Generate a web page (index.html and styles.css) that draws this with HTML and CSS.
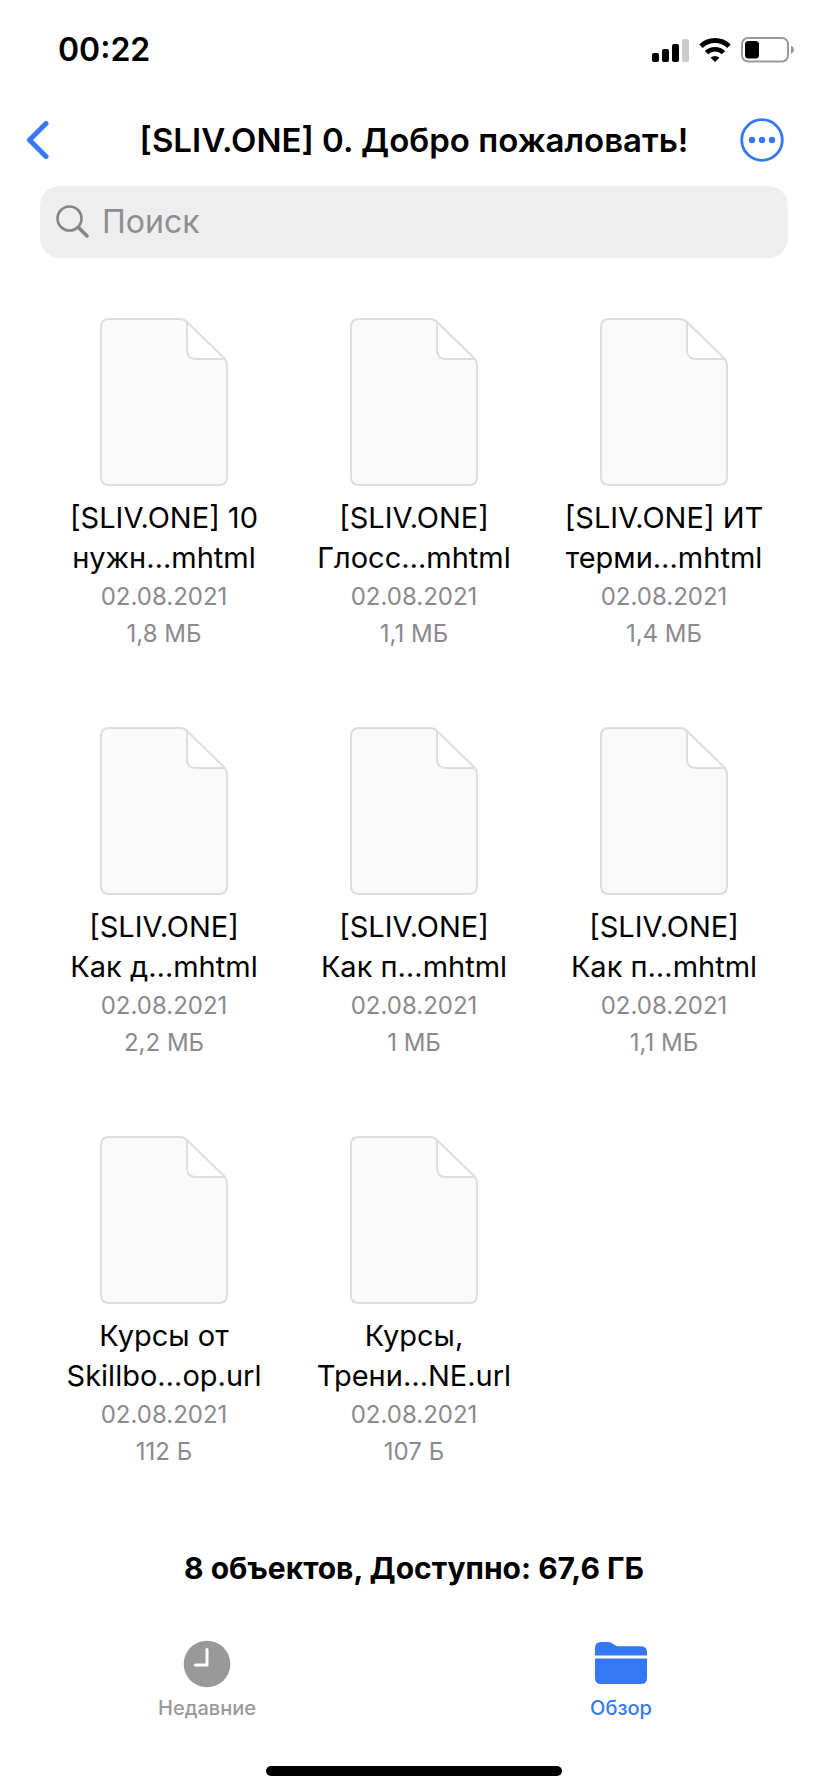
FILE: index.html
```html
<!DOCTYPE html>
<html lang="ru">
<head>
<meta charset="utf-8">
<meta name="viewport" content="width=device-width, initial-scale=1">
<title>[SLIV.ONE] 0. Добро пожаловать!</title>
<link rel="stylesheet" href="styles.css">
</head>
<body>
<svg class="defs" aria-hidden="true">
  <symbol id="doc" viewBox="0 0 128 168">
    <path d="M9 1H80Q84 1 87 4L124 40Q127 43 127 48V159Q127 167 119 167H9Q1 167 1 159V9Q1 1 9 1Z" fill="#fafafa"/>
    <path d="M87 4L124 41H96Q87 41 87 32Z" fill="#fff"/>
    <path d="M9 1H80Q84 1 87 4L124 40Q127 43 127 48V159Q127 167 119 167H9Q1 167 1 159V9Q1 1 9 1ZM87 4V32Q87 41 96 41H124" fill="none" stroke="#dedede" stroke-width="2"/>
  </symbol>
</svg>
<div class="screen">
  <div class="status">
    <span class="time">00:22</span>
    <div class="indicators">
      <svg width="37" height="24" viewBox="0 0 37 24"><rect y="15" width="7" height="9" rx="2"/><rect x="10" y="11" width="7" height="13" rx="2"/><rect x="20" y="6" width="7" height="18" rx="2"/><rect x="30" y="1" width="7" height="23" rx="2" fill="#ccc"/></svg>
      <svg width="32" height="24" viewBox="0 0 32 24"><path d="M2 8.200Q8 2.500 16 2.500T30 8.200" fill="none" stroke="#000" stroke-width="5"/><path d="M7.500 14.700Q11 11.200 16 11.200T24.500 14.700" fill="none" stroke="#000" stroke-width="4.600"/><path d="M11.600 19.600Q16 16.200 20.400 19.600L16.600 23.400Q16 24 15.400 23.400Z"/></svg>
      <svg width="53" height="26" viewBox="0 0 53 26"><rect x="1" y="1" width="46" height="23.500" rx="6" fill="none" stroke="#999" stroke-width="2"/><rect x="4" y="4" width="14" height="17.500" rx="3.500"/><path d="M50 8.500Q53 10 53 12.800T50 17Z" fill="#999"/></svg>
    </div>
  </div>
  <header class="nav">
    <button class="icon-button" type="button" aria-label="Назад"><svg width="24" height="40" viewBox="0 0 24 40"><path d="M20 3.500L3.500 20L20 36.500" fill="none" stroke="#3478f6" stroke-width="5" stroke-linecap="round" stroke-linejoin="round"/></svg></button>
    <h1 class="title">[SLIV.ONE] 0. Добро пожаловать!</h1>
    <button class="icon-button more" type="button" aria-label="Ещё"><svg width="44" height="44" viewBox="0 0 44 44"><circle cx="22" cy="22" r="20.300" fill="none" stroke="#3478f6" stroke-width="2.800"/><g fill="#3478f6"><circle cx="12" cy="22" r="3.200"/><circle cx="22" cy="22" r="3.200"/><circle cx="32" cy="22" r="3.200"/></g></svg></button>
  </header>
  <label class="search">
    <svg width="34" height="34" viewBox="0 0 34 34" fill="none" stroke="#858589" stroke-linecap="round"><circle cx="13.500" cy="13.500" r="12" stroke-width="2.600"/><path d="M22.500 22.500L31 31" stroke-width="3.600"/></svg>
    <input class="search-input" type="search" placeholder="Поиск" aria-label="Поиск">
  </label>
  <main class="content">
    <ul class="files">
      <li class="file"><svg class="doc"><use href="#doc"/></svg><span class="name">[SLIV.ONE] 10<br>нужн…mhtml</span><span class="meta">02.08.2021</span><span class="meta">1,8 МБ</span></li>
      <li class="file"><svg class="doc"><use href="#doc"/></svg><span class="name">[SLIV.ONE]<br>Глосс…mhtml</span><span class="meta">02.08.2021</span><span class="meta">1,1 МБ</span></li>
      <li class="file"><svg class="doc"><use href="#doc"/></svg><span class="name">[SLIV.ONE] ИТ<br>терми…mhtml</span><span class="meta">02.08.2021</span><span class="meta">1,4 МБ</span></li>
      <li class="file"><svg class="doc"><use href="#doc"/></svg><span class="name">[SLIV.ONE]<br>Как д…mhtml</span><span class="meta">02.08.2021</span><span class="meta">2,2 МБ</span></li>
      <li class="file"><svg class="doc"><use href="#doc"/></svg><span class="name">[SLIV.ONE]<br>Как п…mhtml</span><span class="meta">02.08.2021</span><span class="meta">1 МБ</span></li>
      <li class="file"><svg class="doc"><use href="#doc"/></svg><span class="name">[SLIV.ONE]<br>Как п…mhtml</span><span class="meta">02.08.2021</span><span class="meta">1,1 МБ</span></li>
      <li class="file"><svg class="doc"><use href="#doc"/></svg><span class="name">Курсы от<br>Skillbo…op.url</span><span class="meta">02.08.2021</span><span class="meta">112 Б</span></li>
      <li class="file"><svg class="doc"><use href="#doc"/></svg><span class="name">Курсы,<br>Трени…NE.url</span><span class="meta">02.08.2021</span><span class="meta">107 Б</span></li>
    </ul>
    <p class="summary">8 объектов, Доступно: 67,6 ГБ</p>
  </main>
  <nav class="tabs">
    <a class="tab" href="#recent"><svg width="52" height="48" viewBox="0 0 52 48"><circle cx="26" cy="24" r="23.300" fill="#999"/><path d="M26 9.500V25H14.500" fill="none" stroke="#fff" stroke-width="3" stroke-linecap="round" stroke-linejoin="round"/></svg>Недавние</a>
    <a class="tab active" href="#browse" aria-current="page"><svg width="52" height="48" viewBox="0 0 52 48" fill="#3478f6"><path d="M0 15.500V8Q0 2 6 2H13Q16 2 18.500 4.300Q21 6.300 23 6.300H46Q52 6.300 52 12.300V15.500Z"/><path d="M0 18.500H52V38Q52 44 46 44H6Q0 44 0 38Z"/></svg>Обзор</a>
  </nav>
  <div class="home"></div>
</div>
</body>
</html>
```
FILE: styles.css
```css
* { box-sizing: border-box; }
body {
  margin: 0;
  background: #fff;
  color: #000;
  font-family: Inter, "Noto Sans", sans-serif;
}
.defs { display: block; width: 0; height: 0; }
.screen { display: flex; flex-direction: column; min-height: 100vh; }
.status {
  display: flex;
  align-items: center;
  justify-content: space-between;
  height: 100px;
  padding: 0 34px 0 58px;
}
.time { font-size: 32px; font-weight: 600; line-height: 40px; }
.indicators { display: flex; align-items: center; gap: 10px; }
.nav {
  display: grid;
  grid-template-columns: 1fr auto 1fr;
  align-items: center;
  height: 80px;
  padding: 0 26px;
}
.icon-button {
  display: flex;
  justify-self: start;
  padding: 0;
  border: 0;
  background: none;
}
.more { justify-self: end; margin-right: 18px; }
.title {
  margin: 0;
  font-size: 33px;
  font-weight: 600;
  line-height: 40px;
}
.search {
  display: flex;
  align-items: center;
  gap: 12px;
  height: 72px;
  margin: 6px 40px 0;
  padding: 0 16px;
  border-radius: 20px;
  background: #eee;
}
.search-input {
  flex: 1;
  min-width: 0;
  padding: 0;
  border: 0;
  outline: 0;
  background: none;
  font: 400 32px/40px Inter, "Noto Sans", sans-serif;
}
.search-input::placeholder { color: #8e8e92; opacity: 1; }
.content { flex: 1; padding: 60px 39px 0; }
.files {
  display: grid;
  grid-template-columns: repeat(3, 1fr);
  row-gap: 75px;
  margin: 0;
  padding: 0;
  list-style: none;
}
.file {
  display: flex;
  flex-direction: column;
  align-items: center;
  text-align: center;
}
.doc { width: 128px; height: 168px; margin-bottom: 12px; }
.name { font-size: 29px; line-height: 40px; }
.meta { color: #8a8a8e; font-size: 24px; line-height: 37px; }
.summary {
  margin: 78px 0 0;
  text-align: center;
  font-size: 30px;
  font-weight: 700;
  line-height: 40px;
}
.tabs { display: grid; grid-template-columns: 1fr 1fr; }
.tab {
  display: flex;
  flex-direction: column;
  align-items: center;
  gap: 8px;
  color: #999;
  font-size: 20px;
  font-weight: 500;
  line-height: 24px;
  text-decoration: none;
}
.active { color: #3478f6; }
.home {
  width: 296px;
  height: 10px;
  margin: 46px auto 16px;
  border-radius: 5px;
  background: #000;
}
```
